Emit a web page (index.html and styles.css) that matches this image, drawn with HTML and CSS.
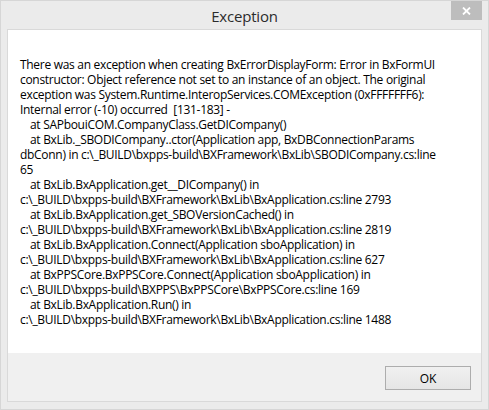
FILE: index.html
```html
<!DOCTYPE html>
<html>
<head>
<meta charset="utf-8">
<link rel="stylesheet" href="styles.css">
</head>
<body>
<div class="window">
  <div class="titlebar">
    <div class="title">Exception</div>
    <div class="close" aria-label="Close">
      <svg width="9" height="8" viewBox="0 0 9 8"><path d="M1 0.5 L8 7.5 M8 0.5 L1 7.5" stroke="#fff" stroke-width="1.8" fill="none"/></svg>
    </div>
  </div>
  <div class="client">
    <div class="message">
      <div class="line">There was an exception when creating BxErrorDisplayForm: Error in BxFormUI</div>
      <div class="line">constructor: Object reference not set to an instance of an object. The original</div>
      <div class="line">exception was System.Runtime.InteropServices.COMException (0xFFFFFFF6):</div>
      <div class="line">Internal error (-10) occurred  [131-183] -</div>
      <div class="line at">at SAPbouiCOM.CompanyClass.GetDICompany()</div>
      <div class="line at">at BxLib._SBODICompany..ctor(Application app, BxDBConnectionParams</div>
      <div class="line">dbConn) in c:\_BUILD\bxpps-build\BXFramework\BxLib\SBODICompany.cs:line</div>
      <div class="line">65</div>
      <div class="line at">at BxLib.BxApplication.get__DICompany() in</div>
      <div class="line">c:\_BUILD\bxpps-build\BXFramework\BxLib\BxApplication.cs:line 2793</div>
      <div class="line at">at BxLib.BxApplication.get_SBOVersionCached() in</div>
      <div class="line">c:\_BUILD\bxpps-build\BXFramework\BxLib\BxApplication.cs:line 2819</div>
      <div class="line at">at BxLib.BxApplication.Connect(Application sboApplication) in</div>
      <div class="line">c:\_BUILD\bxpps-build\BXFramework\BxLib\BxApplication.cs:line 627</div>
      <div class="line at">at BxPPSCore.BxPPSCore.Connect(Application sboApplication) in</div>
      <div class="line">c:\_BUILD\bxpps-build\BXPPS\BxPPSCore\BxPPSCore.cs:line 169</div>
      <div class="line at">at BxLib.BxApplication.Run() in</div>
      <div class="line">c:\_BUILD\bxpps-build\BXFramework\BxLib\BxApplication.cs:line 1488</div>
    </div>
    <div class="footer">
      <button class="ok">OK</button>
    </div>
  </div>
</div>
</body>
</html>
```
FILE: styles.css
```css
html, body {
  margin: 0;
  padding: 0;
}
body {
  width: 489px;
  height: 410px;
  overflow: hidden;
  font-family: "Open Sans", "Noto Sans", sans-serif;
}
.window {
  box-sizing: border-box;
  width: 489px;
  height: 410px;
  border: 1px solid #d6d6d6;
  background: #ebebeb;
  padding: 0 6px 7px 6px;
  display: flex;
  flex-direction: column;
}
.titlebar {
  height: 28px;
  flex: none;
  position: relative;
  display: flex;
  justify-content: center;
}
.title {
  font-size: 15px;
  color: #2b2b2b;
  line-height: 15px;
  padding-top: 8px;
  letter-spacing: -0.2px;
}
.close {
  position: absolute;
  right: 0;
  top: 0;
  width: 31px;
  height: 19px;
  background: #bdbdbd;
  display: flex;
  align-items: center;
  justify-content: center;
}
.close svg {
  display: block;
}
.client {
  flex: 1;
  min-height: 0;
  border: 1px solid #d9d9d9;
  display: flex;
  flex-direction: column;
  background: #f0f0f0;
}
.message {
  flex: none;
  height: 323px;
  box-sizing: border-box;
  overflow: hidden;
  background: #fff;
  padding: 27px 0 0 12px;
  font-size: 12px;
  line-height: 15px;
  color: #000;
  letter-spacing: -0.3px;
}
.line {
  white-space: pre;
  height: 15px;
}
.line.at {
  padding-left: 10px;
}
.footer {
  flex: 1;
  display: flex;
  justify-content: flex-end;
  align-items: flex-start;
  padding: 13px 10px 0 0;
}
.ok {
  width: 86px;
  height: 24px;
  margin: 0;
  border: 1px solid #adadad;
  background: linear-gradient(#f0f0f0, #e5e5e5);
  font-family: "Open Sans", "Noto Sans", sans-serif;
  font-size: 12px;
  color: #000;
  padding: 0;
}
```
